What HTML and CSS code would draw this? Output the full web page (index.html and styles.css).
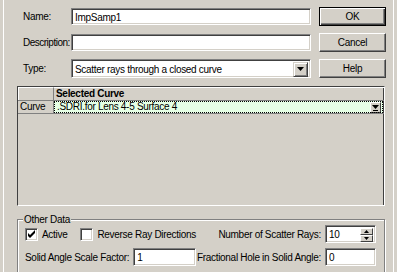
FILE: index.html
```html
<!DOCTYPE html>
<html>
<head>
<meta charset="utf-8">
<link rel="stylesheet" href="styles.css">
</head>
<body>
<div class="dlg">
  <div class="top">
    <label class="lbl">Name:</label>
    <div class="field"><div class="edit">ImpSamp1</div></div>
    <button class="btn default">OK</button>

    <label class="lbl tight">Description:</label>
    <div class="field"><div class="edit"></div></div>
    <button class="btn">Cancel</button>

    <label class="lbl">Type:</label>
    <div class="field"><div class="edit combo"><span class="ctext">Scatter rays through a closed curve</span><span class="dropbtn"><svg width="7" height="4" viewBox="0 0 7 4"><path d="M0 0h7L3.5 4z" fill="#000"/></svg></span></div></div>
    <button class="btn">Help</button>
  </div>

  <div class="table">
    <div class="hrow">
      <div class="rh"></div>
      <div class="ch">Selected Curve</div>
    </div>
    <div class="drow">
      <div class="rh2">Curve</div>
      <div class="cell"><span>.SDRI.for Lens 4-5 Surface 4</span><span class="cellbtn"><svg width="7" height="7" viewBox="0 0 7 7"><path d="M0 1h7L3.5 5z M1 6h5v1H1z" fill="#000"/></svg></span></div>
    </div>
  </div>

  <div class="group">
    <div class="legend">Other Data</div>
    <div class="grow">
      <div class="checks">
        <div class="chk"><span class="box"><svg width="9" height="9" viewBox="0 0 9 9"><path d="M1 3v3l2 2 5-5V0L3 5z" fill="#000"/></svg></span>Active</div>
        <div class="chk"><span class="box"></span>Reverse Ray Directions</div>
      </div>
      <div class="pair">
        <span class="plbl">Number of Scatter Rays:</span>
        <div class="edit num">10<span class="spin"><span class="sbtn"><svg width="5" height="3" viewBox="0 0 5 3"><path d="M2.5 0L5 3H0z" fill="#000"/></svg></span><span class="sbtn"><svg width="5" height="3" viewBox="0 0 5 3"><path d="M0 0h5L2.5 3z" fill="#000"/></svg></span></span></div>
      </div>
    </div>
    <div class="grow">
      <div class="pair left">
        <span class="plbl">Solid Angle Scale Factor:</span>
        <div class="edit small">1</div>
      </div>
      <div class="pair">
        <span class="plbl">Fractional Hole in Solid Angle:</span>
        <div class="edit num">0</div>
      </div>
    </div>
  </div>
</div>
</body>
</html>
```

FILE: styles.css
```css
* { box-sizing: border-box; }
html, body { margin: 0; padding: 0; background: #d4d0c8; }
body {
  font-family: "Liberation Sans", Arial, sans-serif;
  font-size: 10px;
  letter-spacing: -0.3px;
  color: #000;
  white-space: nowrap;
}
.dlg {
  width: 397px;
  height: 272px;
  overflow: hidden;
  border-left: 1px solid #d4d0c8;
  padding: 7px 0 0 16px;
  position: relative;
  box-shadow: inset 2px 0 0 #d4d0c8, inset 3px 0 0 #ffffff;
}
.dlg::after {
  content: "";
  position: absolute;
  top: 0; bottom: 0; left: 392px;
  width: 1px;
  background: #ffffff;
}
.top {
  display: grid;
  grid-template-columns: 54px 240px 67px;
  grid-auto-rows: 19px;
  row-gap: 7px;
  column-gap: 0;
  align-items: center;
}
.lbl { padding-left: 6px; }
.lbl.tight { letter-spacing: -0.5px; }
.top .btn { margin-left: 8px; }
.field { height: 17px; }
.edit {
  height: 17px;
  background: #fff;
  border-top: 1px solid #808080;
  border-left: 1px solid #808080;
  border-bottom: 1px solid #fff;
  border-right: 1px solid #fff;
  box-shadow: inset 1px 1px 0 #404040, inset -1px -1px 0 #d4d0c8;
  padding: 1px 3px 0;
  line-height: 13px;
  display: flex;
  align-items: center;
}
.combo { height: 19px; margin-top: -1px; justify-content: space-between; padding-right: 2px; }
.dropbtn {
  width: 15px; height: 15px;
  background: #d4d0c8;
  border-top: 1px solid #d4d0c8;
  border-left: 1px solid #d4d0c8;
  border-bottom: 1px solid #404040;
  border-right: 1px solid #404040;
  box-shadow: inset 1px 1px 0 #fff, inset -1px -1px 0 #808080;
  display: flex; align-items: center; justify-content: center;
}
.btn {
  font: inherit;
  letter-spacing: inherit;
  height: 19px;
  width: 67px;
  padding: 0;
  background: #d4d0c8;
  border-top: 1px solid #fff;
  border-left: 1px solid #fff;
  border-bottom: 1px solid #404040;
  border-right: 1px solid #404040;
  box-shadow: inset -1px -1px 0 #808080;
  color: #000;
}
.btn.default {
  border: 1px solid #000;
  box-shadow: inset 1px 1px 0 #fff, inset -1px -1px 0 #404040, inset -2px -2px 0 #808080;
}
.table {
  margin-top: 8px;
  width: 368px;
  height: 120px;
  border-top: 1px solid #404040;
  border-left: 1px solid #404040;
  border-right: 1px solid #fff;
  border-bottom: 1px solid #fff;
  box-shadow: inset -1px 0 0 #404040;
}
.hrow, .drow { display: flex; }
.hrow { height: 14px; border-bottom: 1px solid #808080; }
.rh { width: 36px; border-right: 1px solid #808080; border-left: 1px solid #fff; border-top: 1px solid #fff; }
.ch { flex: 1; font-weight: bold; padding-left: 2px; line-height: 12px; border-top: 1px solid #fff; }
.drow { height: 13px; border-bottom: 1px solid #808080; }
.rh2 { width: 36px; border-right: 1px solid #808080; padding-left: 2px; line-height: 12px; }
.cell {
  flex: 1;
  background: #e6ffe6;
  outline: 1px dotted #000;
  outline-offset: -1px;
  display: flex; justify-content: space-between; align-items: center;
  padding: 0 2px 0 3px;
  line-height: 12px;
  margin-right: 1px;
}
.cellbtn {
  width: 11px; height: 11px;
  background: #d4d0c8;
  border-top: 1px solid #fff; border-left: 1px solid #fff;
  border-bottom: 1px solid #404040; border-right: 1px solid #404040;
  display: flex; align-items: center; justify-content: center;
}
.group {
  margin-top: 13px;
  width: 368px;
  height: 80px;
  border: 1px solid #808080;
  box-shadow: inset 1px 1px 0 #fff, 1px 1px 0 #fff;
  position: relative;
  padding: 5px 0 0 7px;
}
.legend {
  position: absolute;
  top: -7px; left: 5px;
  padding: 0 1px;
  background: #d4d0c8;
  line-height: 13px;
}
.grow { display: flex; justify-content: space-between; align-items: center; height: 18px; margin-bottom: 5px; padding-right: 8px; }
.checks { display: flex; gap: 13px; }
.chk { display: flex; align-items: center; gap: 4px; }
.box {
  width: 13px; height: 13px;
  background: #fff;
  border-top: 1px solid #808080; border-left: 1px solid #808080;
  border-bottom: 1px solid #fff; border-right: 1px solid #fff;
  box-shadow: inset 1px 1px 0 #404040, inset -1px -1px 0 #d4d0c8;
  display: flex; align-items: center; justify-content: center;
}
.pair { display: flex; align-items: center; gap: 4px; }
.num { width: 51px; height: 18px; justify-content: space-between; padding-right: 2px; }
.small { width: 63px; height: 18px; }
.spin { display: flex; flex-direction: column; }
.sbtn {
  width: 13px; height: 7px;
  background: #d4d0c8;
  border-top: 1px solid #fff; border-left: 1px solid #fff;
  border-bottom: 1px solid #404040; border-right: 1px solid #404040;
  display: flex; align-items: center; justify-content: center;
}
```
